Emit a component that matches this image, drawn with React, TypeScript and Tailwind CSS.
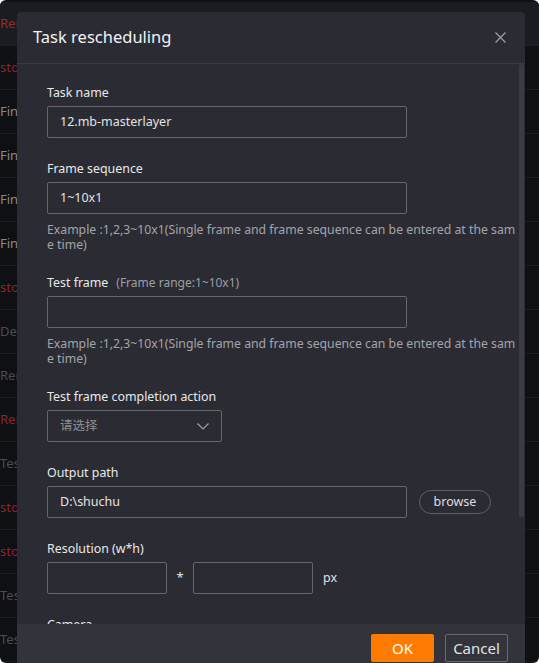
import type { ReactNode } from "react"

const rows: { text: string; tone: "red" | "gray" | "dim" }[] = [
  { text: "stopped", tone: "red" },
  { text: "Finished", tone: "gray" },
  { text: "Finished", tone: "gray" },
  { text: "Finished", tone: "gray" },
  { text: "Finished", tone: "gray" },
  { text: "stopped", tone: "red" },
  { text: "Deleted", tone: "dim" },
  { text: "Rendering", tone: "dim" },
  { text: "Rendering", tone: "red" },
  { text: "Testing", tone: "dim" },
  { text: "stopped", tone: "red" },
  { text: "stopped", tone: "red" },
  { text: "Testing", tone: "dim" },
  { text: "Testing", tone: "dim" },
]

const toneClass = {
  red: "text-[#8f2424]",
  gray: "text-[#8a8a8c]",
  dim: "text-[#4c4d50]",
}

function Field({ label, extra, children }: { label: string; extra?: string; children: ReactNode }) {
  return (
    <div className="mb-[21px]">
      <div className="mb-[3px] flex h-5 items-center text-[12.4px] text-[#e8e8ea]">
        {label}
        {extra && <span className="ml-2 text-[12px] text-[#9d9ea3]">{extra}</span>}
      </div>
      {children}
    </div>
  )
}

function TextInput({ value, width = "w-[360px]" }: { value?: string; width?: string }) {
  return (
    <div
      className={`flex h-8 items-center rounded-[2px] border border-[#66676d] px-3 text-[12.5px] text-[#e2e2e4] ${width}`}
    >
      {value}
    </div>
  )
}

function Hint() {
  return (
    <p className="mt-2 -mb-3 w-[471px] break-all text-[12.25px] leading-[15px] text-[#a3a4a9]">
      Example :1,2,3~10x1(Single frame and frame sequence can be entered at the same time)
    </p>
  )
}

export default function App() {
  return (
    <div className="relative h-[663px] w-[539px] overflow-hidden bg-white font-['Noto_Sans','Noto_Sans_CJK_SC',sans-serif]">
      {/* task list behind the dialog */}
      <div className="h-full overflow-hidden rounded-[6px] bg-[#0f1014] pt-[2px]">
        <div className="flex h-[44px] items-center border-b border-[#202126] bg-[#1b1c21] text-[13px] text-[#9a2a2a]">
          Rendering
        </div>
        {rows.map((r, i) => (
          <div
            key={i}
            className={`flex h-[44px] items-center border-b border-[#1c1d22] text-[13px] ${toneClass[r.tone]}`}
          >
            {r.text}
          </div>
        ))}
      </div>

      {/* dialog */}
      <div className="absolute left-[17px] top-[12px] flex h-[660px] w-[508px] flex-col overflow-hidden rounded-t-[4px] bg-[#2b2c33]">
        <div className="flex h-[52px] shrink-0 items-center justify-between border-b border-[#3b3c43] pl-4 pr-[19px]">
          <h2 className="text-[16.5px] text-[#f2f2f4]">Task rescheduling</h2>
          <svg width="11" height="11" viewBox="0 0 11 11" className="text-[#9c9ea5]">
            <path d="M0.5 0.5 L10.5 10.5 M10.5 0.5 L0.5 10.5" stroke="currentColor" strokeWidth="1.3" />
          </svg>
        </div>

        <div className="relative h-[560px] shrink-0 overflow-hidden pl-[30px] pt-[19px]">
          <div className="absolute right-[1px] top-0 h-[453px] w-[5px] rounded-full bg-[#3b3c43]" />

          <Field label="Task name">
            <TextInput value="12.mb-masterlayer" />
          </Field>

          <Field label="Frame sequence">
            <TextInput value="1~10x1" />
            <Hint />
          </Field>

          <div className="h-3" />
          <Field label="Test frame" extra="(Frame range:1~10x1)">
            <TextInput />
            <Hint />
          </Field>

          <div className="h-3" />
          <Field label="Test frame completion action">
            <div className="flex h-8 w-[175px] items-center justify-between rounded-[2px] border border-[#66676d] pl-3 pr-[12px] text-[12.5px] text-[#8e8f94]">
              请选择
              <svg width="12" height="7" viewBox="0 0 12 7" className="text-[#a0a1a6]">
                <path d="M0.5 0.5 L6 6 L11.5 0.5" fill="none" stroke="currentColor" strokeWidth="1.2" />
              </svg>
            </div>
          </Field>

          <Field label="Output path">
            <div className="flex items-center">
              <TextInput value="D:\shuchu" />
              <button className="ml-3 flex h-6 w-[72px] items-center justify-center rounded-full border border-[#5e5f66] text-[12.5px] text-[#dedee0]">
                browse
              </button>
            </div>
          </Field>

          <Field label="Resolution (w*h)">
            <div className="flex items-center">
              <TextInput width="w-[120px]" />
              <span className="w-[26px] text-center text-[13px] text-[#e2e2e4]">*</span>
              <TextInput width="w-[120px]" />
              <span className="ml-[10px] text-[12.5px] text-[#e2e2e4]">px</span>
            </div>
          </Field>

          <Field label="Camera">
            <TextInput />
          </Field>
        </div>

        <div className="flex h-[48px] shrink-0 justify-end gap-[11px] bg-[#33343b] pr-[17px] pt-[10px]">
          <button className="h-7 w-[63px] rounded-[2px] bg-[#ff7a00] text-[15px] text-white">OK</button>
          <button className="h-7 w-[63px] rounded-[2px] border border-[#6a6b71] text-[15px] text-[#e2e2e4]">
            Cancel
          </button>
        </div>
      </div>
    </div>
  )
}
